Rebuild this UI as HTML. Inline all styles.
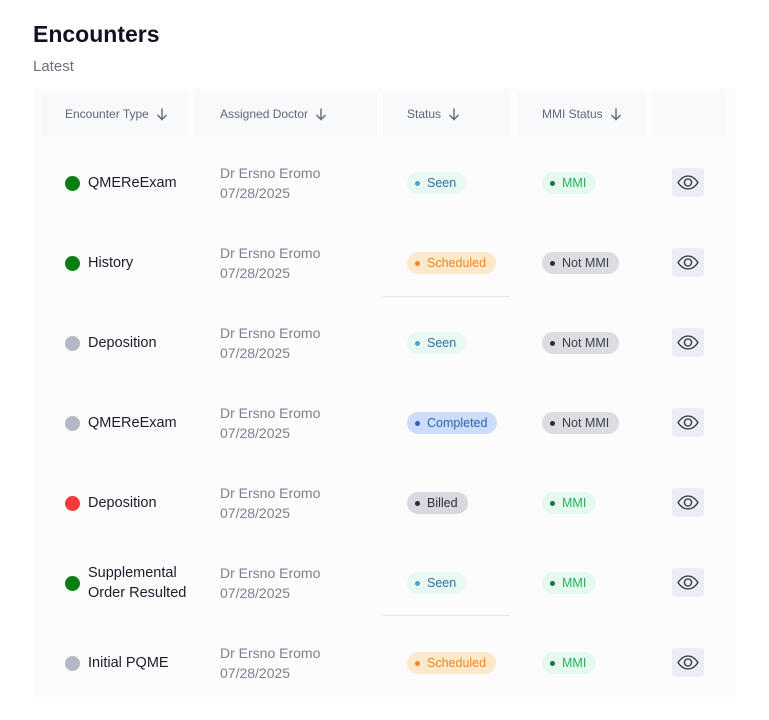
<!DOCTYPE html>
<html><head><style>
*{margin:0;padding:0;box-sizing:border-box}
body{width:769px;height:720px;background:#fff;font-family:"Liberation Sans",sans-serif;position:relative;overflow:hidden}
h1{position:absolute;left:33px;top:21px;font-size:23px;font-weight:700;color:#0f1220}
.sub{position:absolute;left:33px;top:58px;font-size:15px;color:#6b7080}
.panel{position:absolute;left:34px;top:88px;width:702px;height:610px;background:#fcfcfd}
.hc{position:absolute;top:92px;height:44px;background:#f8f9fa;font-size:12px;color:#5f6678;line-height:44px;padding-left:24px}
.hc svg{vertical-align:-3px;margin-left:7px}
.row{position:absolute;left:0;width:769px;height:80px}
.dot{position:absolute;left:65px;width:15px;height:15px;border-radius:50%}
.et{position:absolute;left:88px;font-size:14.5px;color:#1a1d2b;line-height:20px}
.doc{position:absolute;left:220px;font-size:14px;color:#7a8090;line-height:20px}
.b{position:absolute;height:22px;border-radius:11px;font-size:12.5px;line-height:22px;padding:0 10px 0 20px}
.b:before{content:"";position:absolute;left:8px;top:9px;width:5px;height:5px;border-radius:50%;background:currentColor}
.seen{background:#e8f8f3;color:#2e6fb0}.seen:before{background:#4d9fd0}
.sch{background:#fde9cc;color:#f5851f}
.comp{background:#cddcfa;color:#2a64b0}
.bill{background:#d8d8e0;color:#2a2d3a}
.mmi{background:#e6f9ee;color:#21b25a}.mmi:before{background:#127a3a}
.not{background:#dcdde2;color:#3a3e4c}.not:before{background:#2a2d3a}
.eye{position:absolute;left:672px;width:32px;height:29px;background:#ebeef8;border-radius:3px}
.sep{position:absolute;left:383px;width:127px;height:1px;background:#e6e7ea}
</style></head><body>
<h1>Encounters</h1>
<div class="sub">Latest</div>
<div class="panel"></div>
<div class="hc" style="left:41px;width:147px">Encounter Type<svg width="12" height="14" viewBox="0 0 12 14"><path d="M6 1.5v11M1.5 8l4.5 4.5L10.5 8" fill="none" stroke="#5f6678" stroke-width="1.4"/></svg></div>
<div class="hc" style="left:194px;width:183px;padding-left:26px">Assigned Doctor<svg width="12" height="14" viewBox="0 0 12 14"><path d="M6 1.5v11M1.5 8l4.5 4.5L10.5 8" fill="none" stroke="#5f6678" stroke-width="1.4"/></svg></div>
<div class="hc" style="left:383px;width:127px">Status<svg width="12" height="14" viewBox="0 0 12 14"><path d="M6 1.5v11M1.5 8l4.5 4.5L10.5 8" fill="none" stroke="#5f6678" stroke-width="1.4"/></svg></div>
<div class="hc" style="left:518px;width:127px">MMI Status<svg width="12" height="14" viewBox="0 0 12 14"><path d="M6 1.5v11M1.5 8l4.5 4.5L10.5 8" fill="none" stroke="#5f6678" stroke-width="1.4"/></svg></div>
<div class="hc" style="left:652px;width:74px"></div>
<div class="sep" style="top:296px"></div>
<div class="sep" style="top:615px"></div>
<div id="rows"></div>
<script>
var d=[["#0a7d12","QMEReExam","seen","Seen","mmi","MMI"],["#0a7d12","History","sch","Scheduled","not","Not MMI"],["#b4b8c5","Deposition","seen","Seen","not","Not MMI"],["#b4b8c5","QMEReExam","comp","Completed","not","Not MMI"],["#f23a3a","Deposition","bill","Billed","mmi","MMI"],["#0a7d12","Supplemental<br>Order Resulted","seen","Seen","mmi","MMI"],["#b4b8c5","Initial PQME","sch","Scheduled","mmi","MMI"]];
var h="";d.forEach(function(r,i){var c=183+80*i;var two=r[1].indexOf("<br>")>0;
h+='<div class="dot" style="top:'+(c-7)+'px;background:'+r[0]+'"></div>';
h+='<div class="et" style="top:'+(c-(two?20:10))+'px">'+r[1]+'</div>';
h+='<div class="doc" style="top:'+(c-20)+'px">Dr Ersno Eromo<br>07/28/2025</div>';
h+='<div class="b '+r[2]+'" style="left:407px;top:'+(c-11)+'px">'+r[3]+'</div>';
h+='<div class="b '+r[4]+'" style="left:542px;top:'+(c-11)+'px">'+r[5]+'</div>';
h+='<div class="eye" style="top:'+(c-15)+'px"><svg width="32" height="29" viewBox="0 0 32 29"><path d="M6 14.5C9 10 12.5 8 16 8s7 2 10 6.5C23 19 19.5 21 16 21s-7-2-10-6.5z" fill="none" stroke="#333" stroke-width="1.3"/><circle cx="16" cy="14.5" r="3.6" fill="none" stroke="#333" stroke-width="1.3"/></svg></div>';});
document.getElementById("rows").innerHTML=h;
</script>
</body></html>
